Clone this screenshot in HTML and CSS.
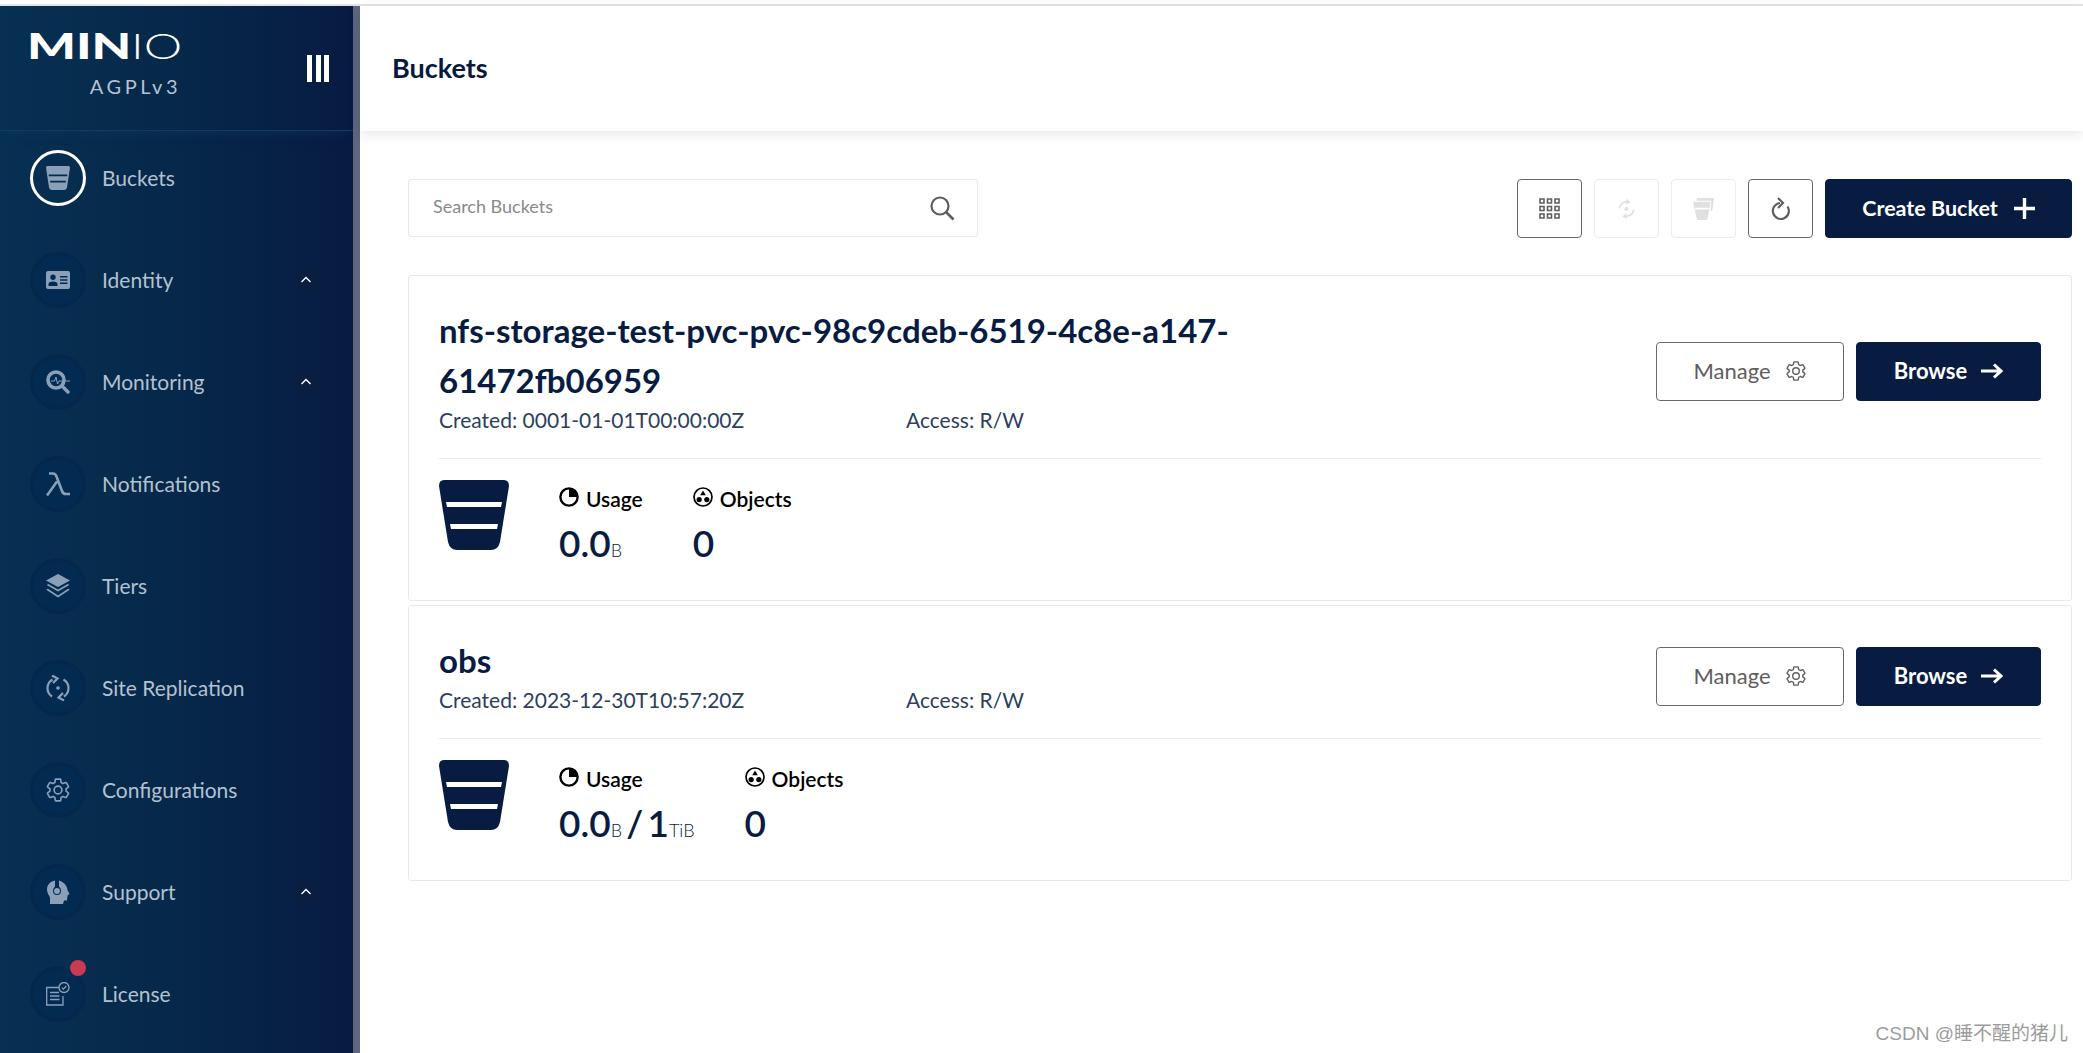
FILE: index.html
```html
<!DOCTYPE html>
<html lang="en">
<head>
    <meta charset="UTF-8">
    <meta name="viewport" content="width=device-width, initial-scale=1.0">
    <title>Buckets</title>
    <link rel="stylesheet" href="styles.css">
</head>
<body>
    <svg class="sprite" width="0" height="0">
        <symbol id="i-gear" viewBox="0 0 24 24">
            <path fill="none" stroke="currentColor" stroke-width="1.5" stroke-linejoin="round" d="M19.43 12.98c.04-.32.07-.64.07-.98 0-.34-.03-.66-.07-.98l2.11-1.65c.19-.15.24-.42.12-.64l-2-3.46c-.09-.16-.26-.25-.44-.25-.06 0-.12.01-.17.03l-2.49 1c-.52-.4-1.08-.73-1.69-.98l-.38-2.65C14.46 2.18 14.25 2 14 2h-4c-.25 0-.46.18-.49.42l-.38 2.65c-.61.25-1.17.59-1.69.98l-2.49-1c-.06-.02-.12-.03-.18-.03-.17 0-.34.09-.43.25l-2 3.46c-.13.22-.07.49.12.64l2.11 1.65c-.04.32-.07.65-.07.98 0 .33.03.66.07.98l-2.11 1.65c-.19.15-.24.42-.12.64l2 3.46c.09.16.26.25.44.25.06 0 .12-.01.17-.03l2.49-1c.52.4 1.08.73 1.69.98l.38 2.65c.03.24.24.42.49.42h4c.25 0 .46-.18.49-.42l.38-2.65c.61-.25 1.17-.59 1.69-.98l2.49 1c.06.02.12.03.18.03.17 0 .34-.09.43-.25l2-3.46c.12-.22.07-.49-.12-.64l-2.11-1.65z"/>
            <circle cx="12" cy="12" r="3.6" fill="none" stroke="currentColor" stroke-width="1.5"/>
        </symbol>
        <symbol id="i-bucket" viewBox="0 0 70 70">
            <path fill="currentColor" d="M5 0H65Q70 0 70 6L61 62Q59 70 52 70H18Q11 70 9 62L0 6Q0 0 5 0Z"/>
            <path fill="#fff" d="M7 22H63L62 27H8ZM11 44H59L58 49H12Z"/>
        </symbol>
        <symbol id="i-chevron" viewBox="0 0 22 22">
            <path fill="none" stroke="currentColor" stroke-width="1.4" d="M6.5 13 11 8.5 15.5 13"/>
        </symbol>
        <symbol id="i-pie" viewBox="0 0 20 20">
            <circle cx="10" cy="10" r="8.6" fill="none" stroke="currentColor" stroke-width="2.4"/>
            <path fill="currentColor" d="M10 1A9 9 0 0 1 19 10H10Z"/>
        </symbol>
        <symbol id="i-objects" viewBox="0 0 20 20">
            <circle cx="10" cy="10" r="9" fill="none" stroke="currentColor" stroke-width="1.7"/>
            <path fill="currentColor" d="M10 3.6 12.8 8.200H7.200Z"/>
            <circle cx="6.200" cy="12.600" r="2.600" fill="currentColor"/>
            <circle cx="13.800" cy="12.600" r="2.600" fill="currentColor"/>
        </symbol>
    </svg>

    <div class="top-line"></div>
    <div class="app">
        <aside class="sidebar">
            <div class="brand">
                <div class="logo-block">
                    <div class="logo"><span class="logo-min">MIN</span><span class="logo-io">IO</span></div>
                    <div class="license-name">AGPLv3</div>
                </div>
                <div class="collapse"><i></i><i></i><i></i></div>
            </div>
            <nav class="nav">
                <div class="nav-item">
                    <span class="nav-icon active">
                        <svg width="24" height="24" viewBox="0 0 24 24"><path fill="currentColor" d="M1.500 0H22.500Q24 0 24 1.500L21 21.500Q20.500 24 18 24H6Q3.500 24 3 21.500L0 1.500Q0 0 1.500 0Z"/><path fill="#062a4e" d="M2.600 8.500H21.400L21.100 10.300H2.900ZM4 14.800H20L19.700 16.500H4.300Z"/></svg>
                    </span>
                    <span class="nav-label">Buckets</span>
                </div>
                <div class="nav-item">
                    <span class="nav-icon">
                        <svg width="24" height="18" viewBox="0 0 24 18"><path fill="currentColor" fill-rule="evenodd" d="M2 0H22Q24 0 24 2V16Q24 18 22 18H2Q0 18 0 16V2Q0 0 2 0ZM7 3.500A2.700 2.700 0 1 0 7 8.900 2.700 2.700 0 0 0 7 3.500ZM2.500 15H11.500V13Q11.500 10.500 7 10.500T2.500 13ZM14 5V6.500H21.500V5ZM14 8.300V9.800H21.500V8.300ZM14 11.600V13.100H21.500V11.600Z"/></svg>
                    </span>
                    <span class="nav-label">Identity</span>
                    <span class="nav-toggle"><svg width="22" height="22"><use href="#i-chevron"/></svg></span>
                </div>
                <div class="nav-item">
                    <span class="nav-icon">
                        <svg width="24" height="24" viewBox="0 0 24 24"><circle cx="10" cy="10" r="8" fill="none" stroke="currentColor" stroke-width="3.600"/><path fill="none" stroke="currentColor" stroke-width="3.400" stroke-linecap="round" d="M16 16 22 22"/><path fill="none" stroke="currentColor" stroke-width="1" d="M5 11H8.500L10 7 11.500 14 13 11H24"/></svg>
                    </span>
                    <span class="nav-label">Monitoring</span>
                    <span class="nav-toggle"><svg width="22" height="22"><use href="#i-chevron"/></svg></span>
                </div>
                <div class="nav-item">
                    <span class="nav-icon">
                        <svg width="24" height="24" viewBox="0 0 24 24"><path fill="none" stroke="currentColor" stroke-width="2.600" d="M3 1.500H7Q9.500 1.500 10.500 4.500L16 19Q17 22 20 22H24M11 9.500 1 23.500"/></svg>
                    </span>
                    <span class="nav-label">Notifications</span>
                </div>
                <div class="nav-item">
                    <span class="nav-icon">
                        <svg width="24" height="24" viewBox="0 0 24 24"><path fill="currentColor" d="M12 0 24 6.500 12 13 0 6.500Z"/><path fill="none" stroke="currentColor" stroke-width="1.600" d="M1.500 10.500 12 16.500 22.500 10.500M1.500 15 1.500 15.500 12 22.500 22.500 15.500 22.500 15"/></svg>
                    </span>
                    <span class="nav-label">Tiers</span>
                </div>
                <div class="nav-item">
                    <span class="nav-icon">
                        <svg width="24" height="26" viewBox="0 0 24 26"><path fill="none" stroke="currentColor" stroke-width="2.200" d="M6.500 4.500A10 10 0 0 0 6 21.500M17.500 4.500A10 10 0 0 1 18 21.500"/><path fill="none" stroke="currentColor" stroke-width="2.200" d="M6 .5 11.500 3.500 7 8M18 25.500 12.500 22.500 17 18"/><circle cx="12" cy="13" r="1.800" fill="currentColor"/></svg>
                    </span>
                    <span class="nav-label">Site Replication</span>
                </div>
                <div class="nav-item">
                    <span class="nav-icon">
                        <svg width="26" height="26"><use href="#i-gear"/></svg>
                    </span>
                    <span class="nav-label">Configurations</span>
                </div>
                <div class="nav-item">
                    <span class="nav-icon">
                        <svg width="24" height="24" viewBox="0 0 24 24"><path fill="currentColor" fill-rule="evenodd" d="M9 0.500C4 1.500 1 5 1 9.500 1 13 3 15 4 17.500V24H17L18 20.500H21L21.500 15.500 23.500 14 21.500 10C21 5 17 1.500 13 0.500L13 6.500A5 5 0 0 1 15 11 4 4 0 0 1 7 11 5 5 0 0 1 9 6.500ZM11 8A3 3 0 1 0 11 14 3 3 0 0 0 11 8Z"/></svg>
                    </span>
                    <span class="nav-label">Support</span>
                    <span class="nav-toggle"><svg width="22" height="22"><use href="#i-chevron"/></svg></span>
                </div>
                <div class="nav-item">
                    <span class="nav-icon">
                        <svg width="24" height="24" viewBox="0 0 24 24"><path fill="none" stroke="currentColor" stroke-width="1.300" d="M14 5.500H0.700V23H17V14"/><path fill="none" stroke="currentColor" stroke-width="1.300" d="M4 10.500H13M4 14H13.500M4 17.500H13.500"/><circle cx="18" cy="5.500" r="5" fill="#062a4e" stroke="currentColor" stroke-width="1.300"/><path fill="none" stroke="currentColor" stroke-width="1.200" d="M15.800 5.600 17.500 7.200 20.300 4"/></svg>
                        <span class="badge"></span>
                    </span>
                    <span class="nav-label">License</span>
                </div>
            </nav>
        </aside>

        <main class="main">
            <header class="page-header">Buckets</header>
            <div class="content">
                <div class="toolbar">
                    <div class="search">
                        <span>Search Buckets</span>
                        <svg width="26" height="26" viewBox="0 0 26 26"><circle cx="11" cy="11" r="8.500" fill="none" stroke="currentColor" stroke-width="2.200"/><path stroke="currentColor" stroke-width="2.600" d="M17 17 24.500 24.500"/></svg>
                    </div>
                    <div class="actions">
                        <button class="icon-btn">
                            <svg width="21" height="21" viewBox="0 0 21 21" fill="none" stroke="currentColor" stroke-width="1.600"><path d="M1 1h4v4H1zM8.500 1h4v4h-4zM16 1h4v4h-4zM1 8.500h4v4H1zM8.500 8.500h4v4h-4zM16 8.500h4v4h-4zM1 16h4v4H1zM8.500 16h4v4h-4zM16 16h4v4h-4z"/></svg>
                        </button>
                        <button class="icon-btn disabled">
                            <svg width="19" height="22" viewBox="0 0 24 26"><path fill="none" stroke="currentColor" stroke-width="2.200" d="M3 12A9 9 0 0 1 13 4M21 14A9 9 0 0 1 11 22"/><path fill="currentColor" d="M12 0 17 4 12 8ZM12 26 7 22 12 18Z"/><circle cx="12" cy="13" r="2.600" fill="currentColor"/></svg>
                        </button>
                        <button class="icon-btn disabled">
                            <svg width="22" height="22" viewBox="0 0 24 24"><path fill="currentColor" d="M4 0H23L21 14 19 14 20 3H4ZM1 4H18Q19 4 19 5L16 22Q16 24 14 24H6Q4 24 4 22L0 5Q0 4 1 4ZM2 10.500V12.500H17V10.500Z"/></svg>
                        </button>
                        <button class="icon-btn">
                            <svg width="20" height="24" viewBox="0 0 20 24"><path fill="none" stroke="currentColor" stroke-width="2.200" d="M16.500 9.500A8 8 0 1 1 9 6"/><path fill="none" stroke="currentColor" stroke-width="2.200" d="M7 1 12 6 7 11"/></svg>
                        </button>
                        <button class="btn btn-primary create-btn">
                            Create Bucket
                            <svg width="21" height="21" viewBox="0 0 21 21"><path stroke="currentColor" stroke-width="3.400" d="M10.500 0V21M0 10.500H21"/></svg>
                        </button>
                    </div>
                </div>

                <section class="bucket-card">
                    <div class="card-top">
                        <div class="card-info">
                            <h2>nfs-storage-test-pvc-pvc-98c9cdeb-6519-4c8e-a147-61472fb06959</h2>
                            <div class="meta"><span class="created">Created: 0001-01-01T00:00:00Z</span><span>Access: R/W</span></div>
                        </div>
                        <div class="card-actions">
                            <button class="btn btn-outline">Manage <svg width="22" height="22"><use href="#i-gear"/></svg></button>
                            <button class="btn btn-primary browse-btn">Browse <svg width="22" height="16" viewBox="0 0 22 16"><path fill="none" stroke="currentColor" stroke-width="3" d="M0 8H19M13 1.500 20 8 13 14.500"/></svg></button>
                        </div>
                    </div>
                    <div class="card-stats">
                        <svg class="bucket-icon" width="70" height="70"><use href="#i-bucket"/></svg>
                        <div class="stat stat-usage">
                            <div class="stat-label"><svg width="20" height="20"><use href="#i-pie"/></svg>Usage</div>
                            <div class="stat-value">0.0<small>B</small></div>
                        </div>
                        <div class="stat">
                            <div class="stat-label"><svg width="20" height="20"><use href="#i-objects"/></svg>Objects</div>
                            <div class="stat-value">0</div>
                        </div>
                    </div>
                </section>

                <section class="bucket-card">
                    <div class="card-top">
                        <div class="card-info">
                            <h2>obs</h2>
                            <div class="meta"><span class="created">Created: 2023-12-30T10:57:20Z</span><span>Access: R/W</span></div>
                        </div>
                        <div class="card-actions">
                            <button class="btn btn-outline">Manage <svg width="22" height="22"><use href="#i-gear"/></svg></button>
                            <button class="btn btn-primary browse-btn">Browse <svg width="22" height="16" viewBox="0 0 22 16"><path fill="none" stroke="currentColor" stroke-width="3" d="M0 8H19M13 1.500 20 8 13 14.500"/></svg></button>
                        </div>
                    </div>
                    <div class="card-stats">
                        <svg class="bucket-icon" width="70" height="70"><use href="#i-bucket"/></svg>
                        <div class="stat stat-usage">
                            <div class="stat-label"><svg width="20" height="20"><use href="#i-pie"/></svg>Usage</div>
                            <div class="stat-value">0.0<small>B</small> / 1<small>TiB</small></div>
                        </div>
                        <div class="stat">
                            <div class="stat-label"><svg width="20" height="20"><use href="#i-objects"/></svg>Objects</div>
                            <div class="stat-value">0</div>
                        </div>
                    </div>
                </section>
            </div>
        </main>
    </div>
    <div class="watermark">CSDN @睡不醒的猪儿</div>
</body>
</html>
```

FILE: styles.css
```css
* {
    box-sizing: border-box;
}
html, body {
    height: 100%;
}
body {
    margin: 0;
    font-family: Lato, sans-serif;
    background: #fff;
    overflow: hidden;
}
.sprite {
    position: absolute;
}
.top-line {
    height: 6px;
    border-bottom: 2px solid #e4e4e4;
}
.app {
    display: flex;
    height: 1047px;
}

/* sidebar */
.sidebar {
    width: 360px;
    flex: none;
    border-right: 7px solid #5f6780;
    background: linear-gradient(90deg, #073052 0%, #062749 55%, #081b43 100%);
}
.brand {
    height: 125px;
    padding: 19px 24px 0 30px;
    display: flex;
    justify-content: space-between;
    align-items: flex-start;
    border-bottom: 1px solid #123a63;
    box-shadow: 0 6px 10px -6px rgba(20, 60, 100, .6);
}
.logo-block {
    width: 151px;
}
.logo {
    height: 40px;
    line-height: 40px;
    color: #fff;
    white-space: nowrap;
    font-size: 36px;
}
.logo-min {
    display: inline-block;
    margin-left: -3px;
    font-weight: 900;
    transform: scaleX(1.43);
    transform-origin: left center;
    width: 104px;
}
.logo-io {
    display: inline-block;
    font-weight: 300;
    transform: scaleX(1.35);
    transform-origin: left center;
}
.license-name {
    margin-top: 9px;
    text-align: right;
    color: #b4c2d3;
    font-size: 20px;
    letter-spacing: 3.500px;
    line-height: 24px;
}
.collapse {
    display: flex;
    gap: 3.5px;
    margin-top: 30px;
}
.collapse i {
    width: 5px;
    height: 27px;
    background: #fff;
}
.nav {
    padding: 19px 36px 0 30px;
    display: flex;
    flex-direction: column;
    gap: 46px;
}
.nav-item {
    display: flex;
    align-items: center;
    height: 56px;
}
.nav-icon {
    position: relative;
    width: 56px;
    height: 56px;
    flex: none;
    border-radius: 50%;
    display: flex;
    align-items: center;
    justify-content: center;
    color: #8aa0b8;
    background: #032b52;
    border: 3px solid #05274b;
}
.nav-icon.active {
    background: transparent;
    border-color: #fff;
}
.nav-label {
    margin: -2px 0 0 16px;
    flex: 1;
    color: #b3c1d1;
    font-size: 21px;
}
.nav-toggle {
    width: 22px;
    height: 22px;
    color: #fff;
    background: #0a1f40;
    border-radius: 2px;
}
.nav-toggle svg {
    display: block;
}
.badge {
    position: absolute;
    top: -9px;
    right: -3px;
    width: 16px;
    height: 16px;
    border-radius: 50%;
    background: #c83b51;
}

/* main area */
.main {
    flex: 1;
    min-width: 0;
}
.page-header {
    height: 125px;
    padding: 0 0 2px 32px;
    display: flex;
    align-items: center;
    font-size: 27px;
    font-weight: 700;
    color: #07193e;
    box-shadow: 0 3px 12px rgba(0, 0, 0, .1);
}
.content {
    padding: 48px 11px 0 48px;
}
.toolbar {
    display: flex;
    justify-content: space-between;
    align-items: flex-start;
    margin-bottom: 37px;
}
.search {
    width: 570px;
    height: 58px;
    padding: 0 22px 0 24px;
    display: flex;
    align-items: center;
    justify-content: space-between;
    border: 1px solid #eaeaea;
    border-radius: 3px;
    color: #5e5e5e;
}
.search span {
    margin-top: -4px;
    font-size: 18px;
    color: #8a8a8a;
}
.actions {
    display: flex;
    gap: 12px;
}
button {
    font-family: inherit;
    cursor: pointer;
}
.icon-btn {
    width: 65px;
    height: 59px;
    padding: 0;
    display: flex;
    align-items: center;
    justify-content: center;
    background: #fff;
    color: #5e5e5e;
    border: 1px solid #696969;
    border-radius: 4px;
}
.icon-btn.disabled {
    color: #dfe0e0;
    border-color: #ececec;
}
.btn {
    height: 59px;
    padding-bottom: 2px;
    display: flex;
    align-items: center;
    justify-content: center;
    gap: 14px;
    border-radius: 4px;
    font-size: 22px;
}
.btn-primary {
    background: #081c42;
    border: 1px solid #081c42;
    color: #fff;
    font-weight: 700;
}
.btn-outline {
    width: 188px;
    background: #fff;
    border: 1px solid #696969;
    color: #5e5e5e;
}
.create-btn {
    width: 247px;
    gap: 16px;
    font-size: 21.500px;
}
.browse-btn {
    width: 185px;
}

/* bucket cards */
.bucket-card {
    margin-bottom: 4px;
    padding: 29px 30px 0;
    border: 1px solid #e8e8e8;
    border-radius: 3px;
}
.card-top {
    display: flex;
    justify-content: space-between;
    align-items: center;
    padding-bottom: 24px;
    border-bottom: 1px solid #eaeaea;
}
.card-info {
    width: 820px;
    color: #081c42;
}
.card-info h2 {
    margin: 0 0 1px;
    font-size: 33px;
    line-height: 50px;
    font-weight: 700;
    overflow-wrap: anywhere;
}
.meta {
    display: flex;
    font-size: 21px;
    line-height: 28px;
    color: #2c3f60;
}
.created {
    width: 467px;
}
.card-actions {
    margin-top: 3px;
    display: flex;
    gap: 12px;
}
.card-stats {
    display: flex;
    padding: 21px 0 27px;
}
.bucket-icon {
    color: #081c42;
    margin-right: 50px;
    flex: none;
}
.stat {
    color: #081c42;
}
.stat-usage {
    margin-right: 50px;
}
.stat-label {
    display: flex;
    align-items: center;
    gap: 7px;
    color: #000;
    font-size: 21px;
    font-weight: 600;
    line-height: 28px;
    margin-top: 5px;
}
.stat-label svg {
    margin-top: -5px;
}
.stat-value {
    margin-top: 7px;
    font-size: 37px;
    line-height: 46px;
    font-weight: 600;
    word-spacing: -5px;
}
.stat-value small {
    font-size: 18px;
    font-weight: 300;
}

.watermark {
    position: absolute;
    right: 15px;
    bottom: 8px;
    font-family: "Liberation Sans", "Noto Sans CJK SC", sans-serif;
    font-size: 19px;
    color: #9c9c9c;
}
```
